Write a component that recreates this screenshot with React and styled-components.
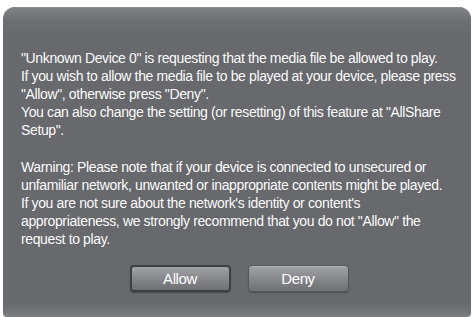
import React from 'react';
import styled, { createGlobalStyle } from 'styled-components';

const Global = createGlobalStyle`
  html, body { margin: 0; padding: 0; background: #ffffff; }
  body { width: 473px; height: 317px; overflow: hidden; }
`;

const Page = styled.div`
  width: 473px;
  height: 317px;
  padding: 7px 2px 0 3px;
  box-sizing: border-box;
`;

const Dialog = styled.div`
  height: 100%;
  border-radius: 12px 12px 4px 4px;
  background: linear-gradient(
    to bottom,
    #818286 0px,
    #6e6f73 14px,
    #68696d 30px,
    #68696d 296px,
    #727377 304px,
    #7e7f83 310px
  );
  box-shadow: inset 0 1px 0 #8a8b8f;
  display: flex;
  flex-direction: column;
  padding: 42px 18px 0 18px;
  box-sizing: border-box;
  font-family: 'Liberation Sans', Arial, sans-serif;
  color: #ffffff;
`;

const Message = styled.div`
  font-size: 14px;
  line-height: 18px;
  letter-spacing: -0.37px;
  white-space: pre;
  text-shadow: 0 0 1px rgba(0, 0, 0, 0.15);
`;

const Gap = styled.div`
  height: 19px;
`;

const Buttons = styled.div`
  display: flex;
  justify-content: center;
  gap: 17px;
  margin-top: 17px;
  padding-left: 4px;
`;

const Button = styled.button`
  width: 101px;
  height: 27px;
  box-sizing: border-box;
  border-radius: 4px;
  border: ${(p) => (p.$focused ? '2px solid #3e3f42' : '1px solid #56575a')};
  background: linear-gradient(to bottom, #a0a1a5 0%, #8a8b8f 45%, #6f7074 100%);
  box-shadow: ${(p) =>
    p.$focused ? '0 1px 1px rgba(0,0,0,0.3)' : 'inset 0 1px 0 #b2b3b7, 0 1px 1px rgba(0,0,0,0.25)'};
  color: #ffffff;
  font-family: 'Liberation Sans', Arial, sans-serif;
  font-size: 15px;
  letter-spacing: -0.4px;
  padding: 0;
  display: flex;
  align-items: center;
  justify-content: center;
`;

export default function App() {
  return (
    <>
      <Global />
      <Page>
        <Dialog>
          <Message>
            {`"Unknown Device 0" is requesting that the media file be allowed to play.
If you wish to allow the media file to be played at your device, please press
"Allow", otherwise press "Deny".
You can also change the setting (or resetting) of this feature at "AllShare
Setup".`}
          </Message>
          <Gap />
          <Message>
            {`Warning: Please note that if your device is connected to unsecured or
unfamiliar network, unwanted or inappropriate contents might be played.
If you are not sure about the network's identity or content's
appropriateness, we strongly recommend that you do not "Allow" the
request to play.`}
          </Message>
          <Buttons>
            <Button $focused>Allow</Button>
            <Button>Deny</Button>
          </Buttons>
        </Dialog>
      </Page>
    </>
  );
}
